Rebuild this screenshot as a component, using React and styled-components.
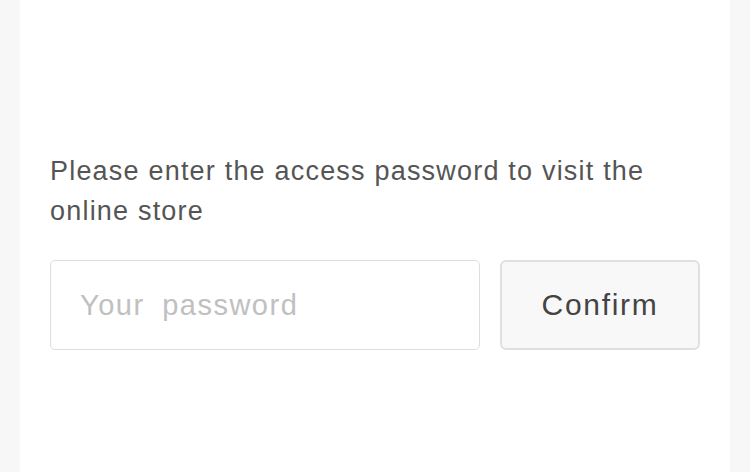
import React from "react";
import styled, { createGlobalStyle } from "styled-components";

const Global = createGlobalStyle`
  html, body { margin: 0; padding: 0; background: #f7f7f7; }
  body { font-family: "Liberation Sans", Arial, sans-serif; }
  * { box-sizing: border-box; }
`;

const Page = styled.div`
  min-height: 472px;
  padding: 0 20px;
  display: flex;
`;

const Card = styled.main`
  flex: 1;
  background: #fff;
  padding: 151px 30px 40px;
  min-height: 472px;
`;

const Message = styled.p`
  margin: 0;
  font-size: 27px;
  line-height: 40px;
  color: #555;
  letter-spacing: 1.2px;
`;

const Form = styled.form`
  display: flex;
  gap: 20px;
  margin-top: 29px;
`;

const Input = styled.input`
  width: 430px;
  height: 90px;
  border: 1px solid #dedede;
  border-radius: 5px;
  padding: 0 29px;
  font-family: inherit;
  font-size: 29px;
  letter-spacing: 1.5px;
  color: #333;
  outline: none;
  background: #fff;
  &::placeholder { color: #c0c0c0; word-spacing: 8px; }
`;

const Button = styled.button`
  width: 200px;
  height: 90px;
  border: 2px solid #e0e0e0;
  border-radius: 6px;
  background: #f8f8f8;
  font-family: inherit;
  font-size: 30px;
  letter-spacing: 1.7px;
  color: #444;
  cursor: pointer;
`;

export default function App() {
  return (
    <>
      <Global />
      <Page>
        <Card>
          <Message>Please enter the access password to visit the online store</Message>
          <Form onSubmit={(e) => e.preventDefault()}>
            <Input type="password" placeholder="Your password" />
            <Button type="submit">Confirm</Button>
          </Form>
        </Card>
      </Page>
    </>
  );
}
